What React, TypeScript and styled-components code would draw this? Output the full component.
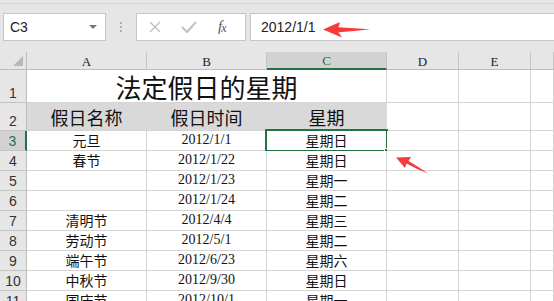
import React from 'react'
import styled, { createGlobalStyle, css } from 'styled-components'

const GREEN = '#217346'
const GRID = '#d4d4d4'
const CHROME = '#e6e6e6'

const GlobalStyle = createGlobalStyle`
  html, body {
    margin: 0;
    padding: 0;
    background: #fff;
    overflow: hidden;
  }
`

const Window = styled.div`
  position: relative;
  width: 554px;
  height: 301px;
  overflow: hidden;
  background: #fff;
  font-family: "Noto Sans CJK SC", sans-serif;
`

const Chrome = styled.div`
  background: ${CHROME};
  height: 52px;
  box-sizing: border-box;
  border-top: 3px solid ${CHROME};
`

const FormulaBar = styled.div`
  display: flex;
  align-items: center;
  height: 49px;
  box-sizing: border-box;
  border-top: 1px solid #d3d3d3;
  padding: 9px 0 11px 3px;
`

const NameBox = styled.div`
  position: relative;
  width: 103px;
  height: 28px;
  box-sizing: border-box;
  background: #fff;
  border: 1px solid #c6c6c6;
  display: flex;
  align-items: center;
  padding-left: 6px;
  font: 14px "Liberation Sans", Arial, sans-serif;
  color: #222;
`

const DropArrow = styled.span`
  margin-left: auto;
  margin-right: 8px;
  width: 0;
  height: 0;
  border-left: 4px solid transparent;
  border-right: 4px solid transparent;
  border-top: 4px solid #777;
`

const Grip = styled.div`
  width: 30px;
  display: flex;
  flex-direction: column;
  align-items: center;
  gap: 2px;

  span {
    width: 2px;
    height: 2px;
    background: #b0b0b0;
  }
`

const FxBox = styled.div`
  width: 110px;
  height: 28px;
  box-sizing: border-box;
  background: #fff;
  border: 1px solid #c6c6c6;
  display: flex;
  align-items: center;
  padding-left: 12px;
  gap: 20px;
`

const FxLabel = styled.span`
  font: italic 15px "Liberation Serif", serif;
  color: #555;
  margin-left: 1px;
  letter-spacing: -1px;

  sub {
    font-size: 12px;
    vertical-align: -1px;
  }
`

const FormulaInput = styled.div`
  flex: 1;
  margin-left: 4px;
  height: 28px;
  box-sizing: border-box;
  background: #fff;
  border: 1px solid #c6c6c6;
  border-right: none;
  display: flex;
  align-items: center;
  padding-left: 10px;
  font: 14px "Liberation Sans", Arial, sans-serif;
  color: #222;
`

const Sheet = styled.div`
  display: grid;
  grid-template-columns: 27px 120px 120px 120px 72px 72px 1fr;
  grid-template-rows: 18px 33px 28px repeat(9, 20px);
`

const Corner = styled.div`
  position: relative;
  background: ${CHROME};
  border-right: 1px solid #bdbdbd;
  border-bottom: 1px solid #bdbdbd;
  box-sizing: border-box;

  &::after {
    content: '';
    position: absolute;
    right: 3px;
    bottom: 3px;
    width: 0;
    height: 0;
    border-left: 10px solid transparent;
    border-bottom: 10px solid #b8b8b8;
  }
`

const ColHead = styled.div<{ $active?: boolean }>`
  background: ${CHROME};
  box-sizing: border-box;
  border-right: 1px solid #c4c4c4;
  border-bottom: 1px solid #bdbdbd;
  display: flex;
  justify-content: center;
  align-items: center;
  padding-top: 2px;
  font: 13px "Liberation Serif", serif;
  color: #222;

  ${p =>
    p.$active &&
    css`
      background: #d2d2d2;
      color: ${GREEN};
      border-bottom: 2px solid ${GREEN};
    `}
`

const RowHead = styled.div<{ $active?: boolean }>`
  background: ${CHROME};
  box-sizing: border-box;
  border-right: 1px solid #bdbdbd;
  border-bottom: 1px solid #c4c4c4;
  display: flex;
  justify-content: center;
  align-items: flex-end;
  padding-bottom: 1px;
  font: 14px "Liberation Sans", sans-serif;
  color: #333;

  ${p =>
    p.$active &&
    css`
      background: #d2d2d2;
      color: ${GREEN};
      border-right: 2px solid ${GREEN};
    `}
`

const Cell = styled.div<{ $span?: number; $fill?: boolean; $kind?: 'title' | 'head' | 'date' | 'text' }>`
  position: relative;
  box-sizing: border-box;
  grid-column: span ${p => p.$span ?? 1};
  border-right: 1px solid ${p => (p.$fill ? '#d9d9d9' : GRID)};
  border-bottom: 1px solid ${GRID};
  background: ${p => (p.$fill ? '#d9d9d9' : '#fff')};
  display: flex;
  justify-content: center;
  align-items: flex-end;
  white-space: nowrap;
  color: #111;
  font-size: 14px;
  line-height: 18px;
  padding-bottom: 1px;

  ${p =>
    p.$kind === 'title' &&
    css`
      font-size: 26px;
      line-height: 30px;
      padding-bottom: 0;
    `}
  ${p =>
    p.$kind === 'head' &&
    css`
      font-size: 18px;
      line-height: 22px;
      padding-bottom: 2px;
    `}
  ${p =>
    p.$kind === 'date' &&
    css`
      font-family: "Liberation Serif", serif;
      font-size: 14px;
    `}
`

const Selection = styled.div`
  position: absolute;
  top: -2px;
  left: -2px;
  right: -2px;
  bottom: -2px;
  border: 2px solid ${GREEN};
  pointer-events: none;
`

const FillHandle = styled.div`
  position: absolute;
  right: -5px;
  bottom: -5px;
  width: 6px;
  height: 6px;
  background: ${GREEN};
  border-left: 1px solid #fff;
  border-top: 1px solid #fff;
`

const Arrow = styled.svg<{ $left: number; $top: number }>`
  position: absolute;
  left: ${p => p.$left}px;
  top: ${p => p.$top}px;
  pointer-events: none;
`

type Row = { name: string; date: string; day: string }

const rows: Row[] = [
  { name: '元旦', date: '2012/1/1', day: '星期日' },
  { name: '春节', date: '2012/1/22', day: '星期日' },
  { name: '', date: '2012/1/23', day: '星期一' },
  { name: '', date: '2012/1/24', day: '星期二' },
  { name: '清明节', date: '2012/4/4', day: '星期三' },
  { name: '劳动节', date: '2012/5/1', day: '星期二' },
  { name: '端午节', date: '2012/6/23', day: '星期六' },
  { name: '中秋节', date: '2012/9/30', day: '星期日' },
  { name: '国庆节', date: '2012/10/1', day: '星期一' },
]

const columns = ['A', 'B', 'C', 'D', 'E', '']

export default function App() {
  return (
    <Window>
      <GlobalStyle />
      <Chrome>
        <FormulaBar>
          <NameBox>
            C3
            <DropArrow />
          </NameBox>
          <Grip>
            <span />
            <span />
            <span />
          </Grip>
          <FxBox>
            <svg width="12" height="12" viewBox="0 0 12 12">
              <path d="M1 1 L11 11 M11 1 L1 11" stroke="#bdbdbd" strokeWidth="1.3" fill="none" />
            </svg>
            <svg width="16" height="12" viewBox="0 0 16 12">
              <path d="M1 6 L6 11 L15 1" stroke="#c4c4c4" strokeWidth="2.2" fill="none" />
            </svg>
            <FxLabel>
              f<sub>x</sub>
            </FxLabel>
          </FxBox>
          <FormulaInput>2012/1/1</FormulaInput>
        </FormulaBar>
      </Chrome>

      <Sheet>
        <Corner />
        {columns.map(c => (
          <ColHead key={c || 'F'} $active={c === 'C'}>
            {c}
          </ColHead>
        ))}

        <RowHead>1</RowHead>
        <Cell $span={3} $kind="title">法定假日的星期</Cell>
        <Cell />
        <Cell />
        <Cell />

        <RowHead>2</RowHead>
        <Cell $fill $kind="head">假日名称</Cell>
        <Cell $fill $kind="head">假日时间</Cell>
        <Cell $fill $kind="head">星期</Cell>
        <Cell />
        <Cell />
        <Cell />

        {rows.map((r, i) => (
          <React.Fragment key={i}>
            <RowHead $active={i === 0}>{i + 3}</RowHead>
            <Cell $kind="text">{r.name}</Cell>
            <Cell $kind="date">{r.date}</Cell>
            <Cell $kind="text">
              {r.day}
              {i === 0 && (
                <Selection>
                  <FillHandle />
                </Selection>
              )}
            </Cell>
            <Cell />
            <Cell />
            <Cell />
          </React.Fragment>
        ))}
      </Sheet>

      <Arrow $left={320} $top={20} width="54" height="20" viewBox="0 0 54 20">
        <path d="M3 9.5 L20 2 L18.5 7.2 Q34 8 50 9.2 Q34 11 18.5 12.2 L22 17.5 Z" fill="#f63b3b" />
      </Arrow>
      <Arrow $left={392} $top={153} width="40" height="24" viewBox="0 0 40 24">
        <path d="M4 4.5 L19 4 L16.5 8 Q27 14 36 20.5 Q24 16 14.5 10.5 L13 15 Z" fill="#f63b3b" />
      </Arrow>
    </Window>
  )
}
